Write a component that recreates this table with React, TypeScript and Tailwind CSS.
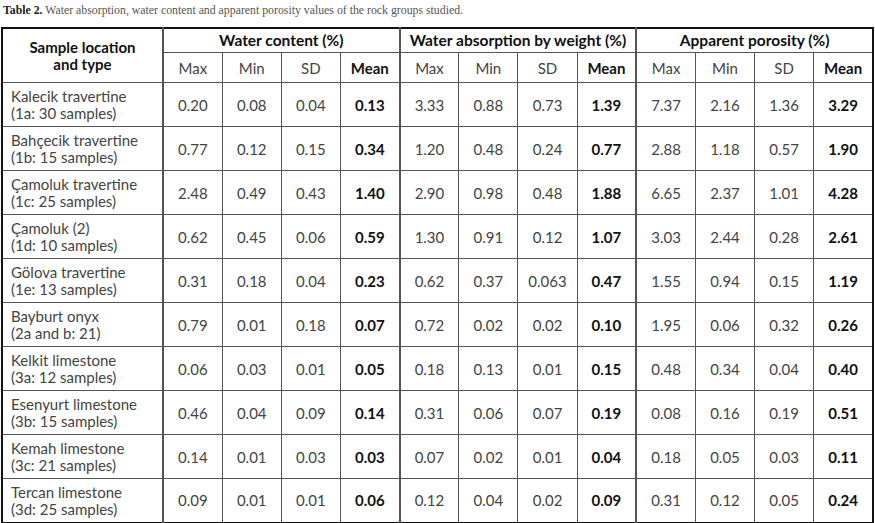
import React from 'react';

type Row = {
  name: string;
  sub: string;
  values: string[];
};

const rows: Row[] = [
  { name: 'Kalecik travertine', sub: '(1a: 30 samples)', values: ['0.20', '0.08', '0.04', '0.13', '3.33', '0.88', '0.73', '1.39', '7.37', '2.16', '1.36', '3.29'] },
  { name: 'Bahçecik travertine', sub: '(1b: 15 samples)', values: ['0.77', '0.12', '0.15', '0.34', '1.20', '0.48', '0.24', '0.77', '2.88', '1.18', '0.57', '1.90'] },
  { name: 'Çamoluk travertine', sub: '(1c: 25 samples)', values: ['2.48', '0.49', '0.43', '1.40', '2.90', '0.98', '0.48', '1.88', '6.65', '2.37', '1.01', '4.28'] },
  { name: 'Çamoluk (2)', sub: '(1d: 10 samples)', values: ['0.62', '0.45', '0.06', '0.59', '1.30', '0.91', '0.12', '1.07', '3.03', '2.44', '0.28', '2.61'] },
  { name: 'Gölova travertine', sub: '(1e: 13 samples)', values: ['0.31', '0.18', '0.04', '0.23', '0.62', '0.37', '0.063', '0.47', '1.55', '0.94', '0.15', '1.19'] },
  { name: 'Bayburt onyx', sub: '(2a and b: 21)', values: ['0.79', '0.01', '0.18', '0.07', '0.72', '0.02', '0.02', '0.10', '1.95', '0.06', '0.32', '0.26'] },
  { name: 'Kelkit limestone', sub: '(3a: 12 samples)', values: ['0.06', '0.03', '0.01', '0.05', '0.18', '0.13', '0.01', '0.15', '0.48', '0.34', '0.04', '0.40'] },
  { name: 'Esenyurt limestone', sub: '(3b: 15 samples)', values: ['0.46', '0.04', '0.09', '0.14', '0.31', '0.06', '0.07', '0.19', '0.08', '0.16', '0.19', '0.51'] },
  { name: 'Kemah limestone', sub: '(3c: 21 samples)', values: ['0.14', '0.01', '0.03', '0.03', '0.07', '0.02', '0.01', '0.04', '0.18', '0.05', '0.03', '0.11'] },
  { name: 'Tercan limestone', sub: '(3d: 25 samples)', values: ['0.09', '0.01', '0.01', '0.06', '0.12', '0.04', '0.02', '0.09', '0.31', '0.12', '0.05', '0.24'] },
];

const groups = ['Water content (%)', 'Water absorption by weight (%)', 'Apparent porosity (%)'];
const subs = ['Max', 'Min', 'SD', 'Mean'];

export default function App() {
  return (
    <div className="w-[875px] h-[523px] bg-white overflow-hidden font-['Lato',sans-serif] text-[#444]">
      {/* Caption */}
      <div className="pl-[3px] pt-[3px] h-[27px] font-['Liberation_Serif',serif] text-[11.8px] text-[#555] leading-[14px]">
        <span className="font-bold text-[#222]">Table 2.</span> Water absorption, water content and apparent porosity values of the rock groups studied.
      </div>

      <table className="ml-[1px] w-[873px] table-fixed border-collapse border-2 border-[#111]">
        <colgroup>
          <col className="w-[161px]" />
          {Array.from({ length: 12 }).map((_, i) => (
            <col key={i} />
          ))}
        </colgroup>
        <thead>
          <tr className="h-[23px]">
            <th
              rowSpan={2}
              className="border-r-2 border-b border-[#555] text-[15px] font-bold text-[#111] leading-[17px] align-middle"
            >
              Sample location
              <br />
              and type
            </th>
            {groups.map((g, i) => (
              <th
                key={g}
                colSpan={4}
                className={`border-b border-[#555] text-[15.5px] font-bold text-[#111] align-middle ${i < 2 ? 'border-r-2' : ''}`}
              >
                {g}
              </th>
            ))}
          </tr>
          <tr className="h-[30px]">
            {groups.map((g, gi) =>
              subs.map((s, si) => (
                <th
                  key={g + s}
                  className={`border-b border-[#555] text-[15px] align-middle ${
                    si === 3 ? 'font-bold text-[#111]' : 'font-normal'
                  } ${si === 3 && gi < 2 ? 'border-r-2' : 'border-r'} ${si === 3 && gi === 2 ? 'border-r-0' : ''}`}
                >
                  {s}
                </th>
              ))
            )}
          </tr>
        </thead>
        <tbody>
          {rows.map((r) => (
            <tr key={r.name} className="h-[44px]">
              <td className="border-r-2 border-b border-[#555] pl-[8px] text-[15px] leading-[17px] align-middle whitespace-nowrap">
                {r.name}
                <br />
                {r.sub}
              </td>
              {r.values.map((v, i) => (
                <td
                  key={i}
                  className={`border-b border-[#555] text-center text-[15px] align-middle ${
                    i % 4 === 3 ? 'font-bold text-[#111]' : ''
                  } ${i === 3 || i === 7 ? 'border-r-2' : i === 11 ? '' : 'border-r'}`}
                >
                  {v}
                </td>
              ))}
            </tr>
          ))}
        </tbody>
      </table>
    </div>
  );
}
